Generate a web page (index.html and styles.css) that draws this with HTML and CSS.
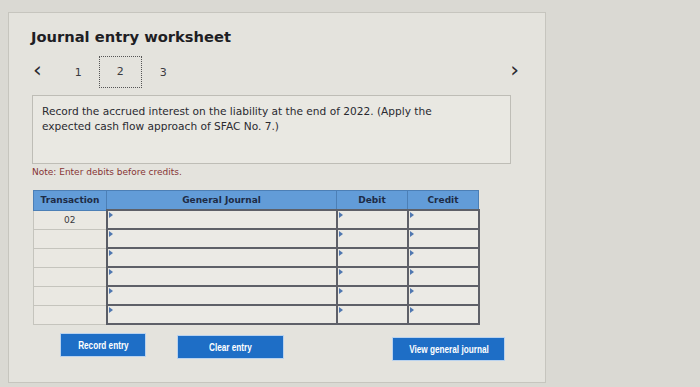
FILE: index.html
```html
<!DOCTYPE html>
<html lang="en">
<head>
    <meta charset="UTF-8">
    <meta name="viewport" content="width=device-width, initial-scale=1.0">
    <title>Journal entry worksheet</title>
    <link rel="stylesheet" href="styles.css">
</head>
<body>
    <div class="worksheet">
        <h1>Journal entry worksheet</h1>

        <div class="steps">
            <span class="arrow">&lsaquo;</span>
            <span class="step first">1</span>
            <span class="step current">2</span>
            <span class="step">3</span>
            <span class="arrow next">&rsaquo;</span>
        </div>

        <div class="question">
            Record the accrued interest on the liability at the end of 2022. (Apply the<br>
            expected cash flow approach of SFAC No. 7.)
        </div>

        <p class="note">Note: Enter debits before credits.</p>

        <table class="journal">
            <thead>
                <tr>
                    <th class="col-tr">Transaction</th>
                    <th class="col-gj">General Journal</th>
                    <th class="col-amt">Debit</th>
                    <th class="col-amt">Credit</th>
                </tr>
            </thead>
            <tbody>
                <tr>
                    <td class="tr">02</td>
                    <td class="entry"></td>
                    <td class="entry"></td>
                    <td class="entry"></td>
                </tr>
                <tr>
                    <td class="tr"></td>
                    <td class="entry"></td>
                    <td class="entry"></td>
                    <td class="entry"></td>
                </tr>
                <tr>
                    <td class="tr"></td>
                    <td class="entry"></td>
                    <td class="entry"></td>
                    <td class="entry"></td>
                </tr>
                <tr>
                    <td class="tr"></td>
                    <td class="entry"></td>
                    <td class="entry"></td>
                    <td class="entry"></td>
                </tr>
                <tr>
                    <td class="tr"></td>
                    <td class="entry"></td>
                    <td class="entry"></td>
                    <td class="entry"></td>
                </tr>
                <tr>
                    <td class="tr"></td>
                    <td class="entry"></td>
                    <td class="entry"></td>
                    <td class="entry"></td>
                </tr>
            </tbody>
        </table>

        <div class="actions">
            <button class="btn btn-record"><span>Record entry</span></button>
            <button class="btn btn-clear"><span>Clear entry</span></button>
            <button class="btn btn-view"><span>View general journal</span></button>
        </div>
    </div>
</body>
</html>
```

FILE: styles.css
```css
body {
    margin: 0;
    background-color: #dad9d3;
    font-family: "DejaVu Sans", Verdana, sans-serif;
    color: #26262a;
}

.worksheet {
    box-sizing: border-box;
    width: 538px;
    height: 371px;
    margin: 12px 0 0 8px;
    padding: 15px 0 0 22px;
    background-color: #e4e3dd;
    border: 1px solid #c6c5be;
}

h1 {
    margin: 0;
    font-size: 14.7px;
    font-weight: bold;
    color: #1e1e24;
}

.steps {
    display: flex;
    align-items: center;
    height: 32px;
    margin-top: 11px;
    width: 488px;
}

.arrow {
    font-size: 22px;
    line-height: 20px;
    color: #2a2a30;
    margin-left: 2px;
    padding-bottom: 4px;
}

.arrow.next {
    margin-left: auto;
}

.step {
    font-size: 11px;
    color: #3a3a40;
    width: 43px;
    text-align: center;
}

.step.first {
    margin-left: 15px;
}

.step.current {
    box-sizing: border-box;
    height: 32px;
    line-height: 30px;
    border: 1px dotted #555;
    margin: 0 0 0 -1px;
}

.question {
    box-sizing: border-box;
    width: 479px;
    height: 69px;
    margin: 7px 0 0 1px;
    padding: 8px 9px;
    background-color: #e9e8e2;
    border: 1px solid #bebdb6;
    font-size: 10.6px;
    line-height: 15px;
    color: #2a2a30;
}

.note {
    margin: 3px 0 0 1px;
    font-size: 9px;
    color: #863434;
}

.journal {
    border-collapse: collapse;
    margin: 13px 0 0 2px;
    width: 443px;
    table-layout: fixed;
}

.journal th {
    height: 18px;
    padding: 0;
    background-color: #629cd8;
    color: #1d2b45;
    font-size: 9px;
    font-weight: bold;
    border: 1px solid #4c7fb6;
}

.col-tr { width: 72px; }
.col-gj { width: 229px; }
.col-amt { width: 70px; }

.journal td {
    height: 17px;
    padding: 0;
}

.tr {
    background-color: #eae8e2;
    border: 1px solid #c5c4bd;
    border-right: 2px solid #5a5d66;
    text-align: center;
    font-size: 9px;
    color: #3a3a40;
}

.entry {
    position: relative;
    background-color: #ebeae5;
    border: 2px solid #5e6068;
}

.entry::before {
    content: "";
    position: absolute;
    top: 1px;
    left: 1px;
    border-top: 3px solid transparent;
    border-bottom: 3px solid transparent;
    border-left: 4px solid #4f77b0;
}

.actions {
    display: flex;
    align-items: flex-start;
    margin-top: 8px;
}

.btn {
    height: 24px;
    padding: 0;
    border: 1px solid #b9d2ee;
    background-color: #1e6ec6;
    color: #ffffff;
    font-family: "Liberation Sans", Arial, sans-serif;
    font-size: 10.5px;
    font-weight: bold;
}

.btn span {
    display: inline-block;
    transform: scaleX(0.78);
    white-space: nowrap;
}

.btn-record {
    width: 86px;
    margin-left: 29px;
}

.btn-clear {
    width: 107px;
    margin: 2px 0 0 31px;
}

.btn-view {
    width: 113px;
    margin: 4px 0 0 108px;
}
```
